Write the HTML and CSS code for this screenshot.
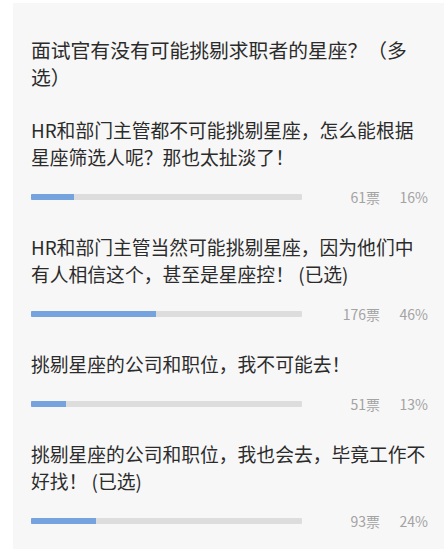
FILE: index.html
```html
<!DOCTYPE html>
<html lang="zh-CN">
<head>
<meta charset="utf-8">
<link rel="stylesheet" href="styles.css">
</head>
<body>
<div class="panel">
  <div class="title">面试官有没有可能挑剔求职者的星座？（多选）</div>
  <div class="option">
    <div class="text">HR和部门主管都不可能挑剔星座，怎么能根据星座筛选人呢？那也太扯淡了！</div>
    <div class="row">
      <div class="track"><div class="fill" style="width:16%"></div></div>
      <span class="votes">61票</span>
      <span class="pct">16%</span>
    </div>
  </div>
  <div class="option">
    <div class="text">HR和部门主管当然可能挑剔星座，因为他们中有人相信这个，甚至是星座控！ (已选)</div>
    <div class="row">
      <div class="track"><div class="fill" style="width:46%"></div></div>
      <span class="votes">176票</span>
      <span class="pct">46%</span>
    </div>
  </div>
  <div class="option">
    <div class="text">挑剔星座的公司和职位，我不可能去！</div>
    <div class="row">
      <div class="track"><div class="fill" style="width:13%"></div></div>
      <span class="votes">51票</span>
      <span class="pct">13%</span>
    </div>
  </div>
  <div class="option">
    <div class="text">挑剔星座的公司和职位，我也会去，毕竟工作不好找！ (已选)</div>
    <div class="row">
      <div class="track"><div class="fill" style="width:24%"></div></div>
      <span class="votes">93票</span>
      <span class="pct">24%</span>
    </div>
  </div>
</div>
</body>
</html>
```

FILE: styles.css
```css
html, body {
  margin: 0;
  padding: 0;
  background: #ffffff;
  overflow: hidden;
}
body {
  padding: 3px 3px 0 13px;
  font-family: "Noto Sans CJK SC", "Noto Sans", sans-serif;
  color: #2b2b2b;
}
.panel {
  background: #f7f7f7;
  padding: 33px 16px 0 18px;
  height: 546px;
  box-sizing: border-box;
}
.title {
  font-size: 19.8px;
  line-height: 27px;
  width: 385px;
}
.option {
  margin-top: 26px;
}
.text {
  font-size: 18.8px;
  line-height: 27px;
  width: 398px;
}
.row {
  display: flex;
  align-items: center;
  height: 20px;
  margin-top: 17px;
}
.track {
  width: 271px;
  height: 6px;
  background: #dddddd;
  border-radius: 1px;
  overflow: hidden;
}
.fill {
  height: 100%;
  background: #74a3de;
}
.votes {
  width: 78px;
  text-align: right;
  font-size: 14px;
  color: #a3a3a3;
}
.pct {
  width: 48px;
  text-align: right;
  font-size: 14px;
  color: #a3a3a3;
}
```
